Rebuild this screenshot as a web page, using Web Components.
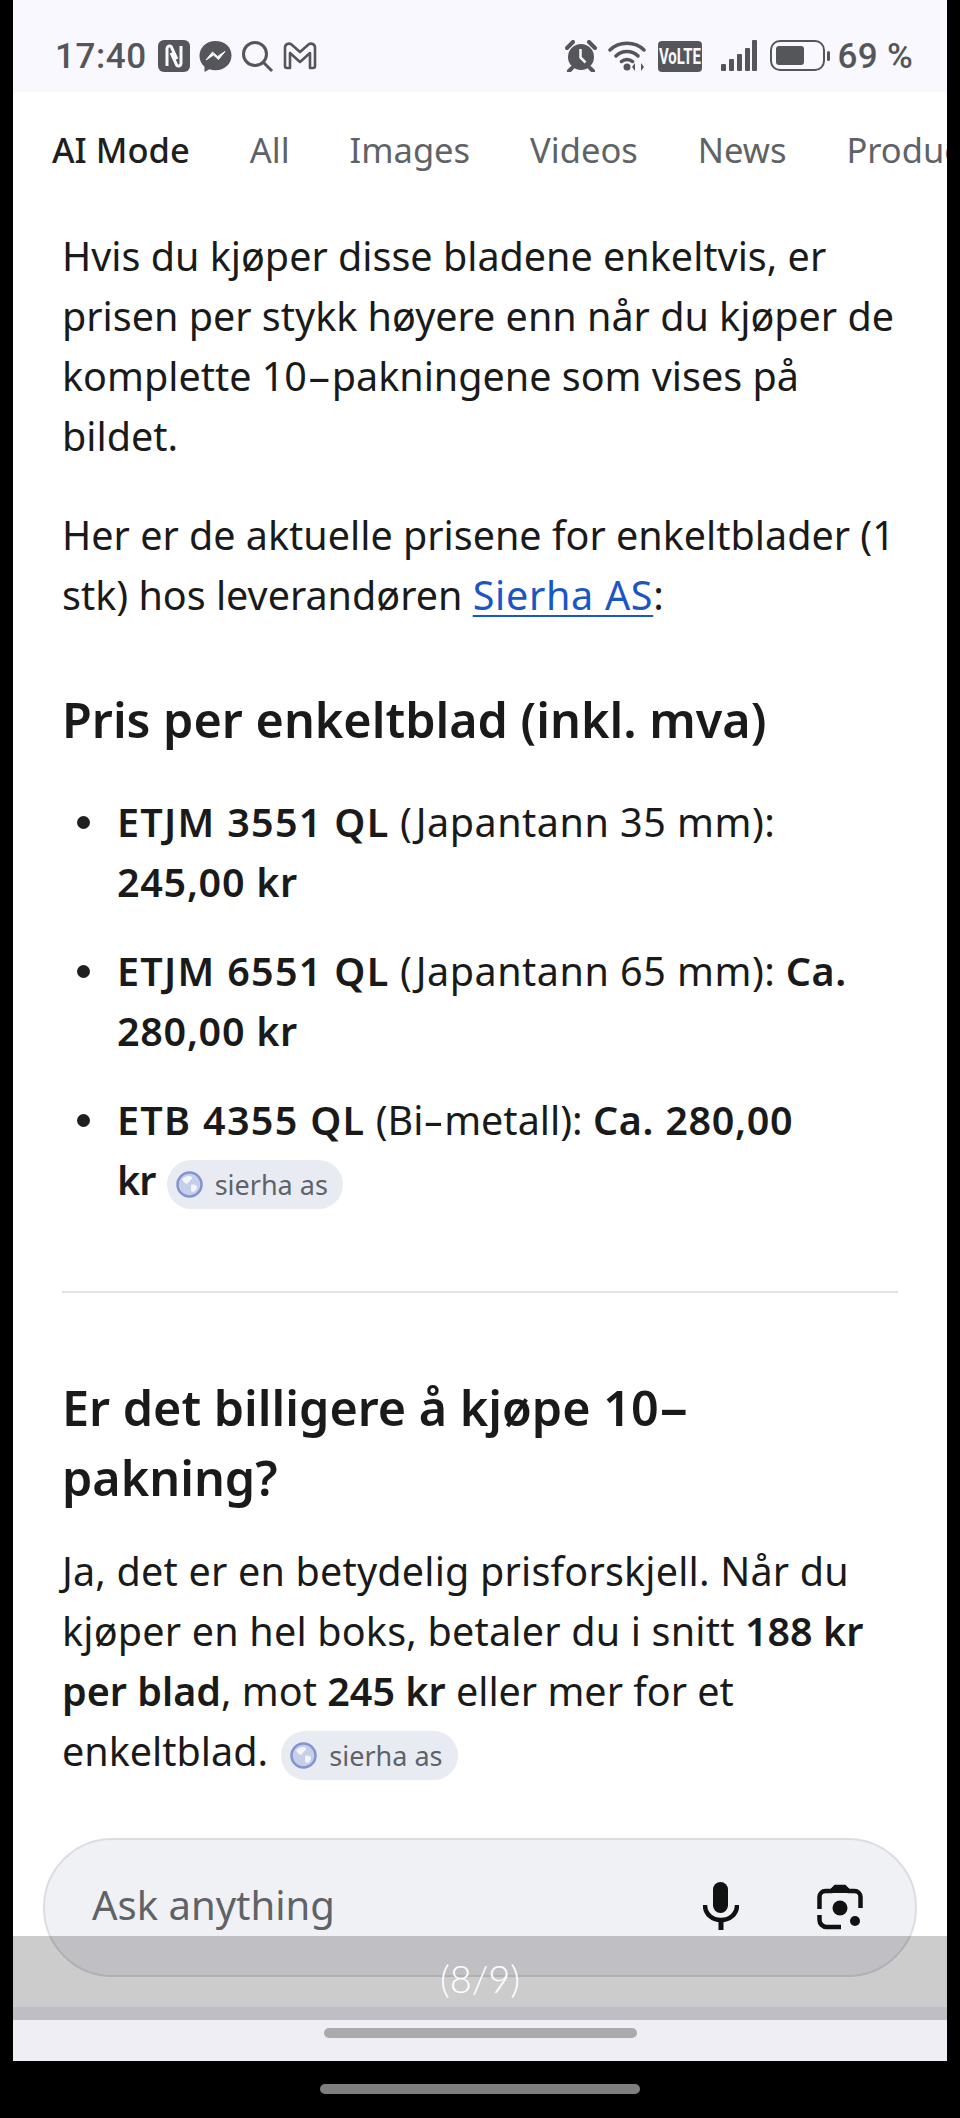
<!DOCTYPE html>
<html>
<head>
<meta charset="utf-8">
<title>AI Mode</title>
<style>
    html, body { margin: 0; background: #000; }
    a { color: #1a56c4; letter-spacing: .7px; text-decoration: underline; text-decoration-thickness: 2px; text-underline-offset: 5px; }
    b { font-weight: 600; }
    b.num { letter-spacing: .7px; }
    b.code { letter-spacing: 1.300px; }
    b.tight { letter-spacing: -1px; }
    .wide { letter-spacing: .5px; }
    .wide-s { letter-spacing: .2px; }
    /* le trait d'union de la police d'origine est plus long */
    .dash { display: inline-block; transform: scaleX(1.900); margin: 0 6px; }
    .dash-s { display: inline-block; transform: scaleX(1.600); margin: 0 4px; }
    .dash-h { display: inline-block; transform: scaleX(1.900); margin: 0 7px; }
</style>
</head>
<body>

<phone-frame>
    <status-bar></status-bar>
    <tab-strip>
        <tab-link active>AI Mode</tab-link>
        <tab-link>All</tab-link>
        <tab-link>Images</tab-link>
        <tab-link>Videos</tab-link>
        <tab-link>News</tab-link>
        <tab-link>Products</tab-link>
    </tab-strip>
    <answer-body>
        <answer-para>Hvis du kjøper disse bladene enkeltvis, er<br>prisen per stykk høyere enn når du kjøper de<br>komplette 10<span class="dash">-</span>pakningene som vises på<br>bildet.</answer-para>
        <answer-para>Her er de aktuelle prisene for enkeltblader (1<br>stk) hos leverandøren <a href="#">Sierha AS</a>:</answer-para>
        <answer-heading>Pris per enkeltblad (inkl. mva)</answer-heading>
        <bullet-list>
            <bullet-item><b class="code">ETJM 3551 QL</b> <span class="wide">(Japantann 35 mm):</span><br><b class="num">245,00 kr</b></bullet-item>
            <bullet-item><b class="code">ETJM 6551 QL</b> <span class="wide">(Japantann 65 mm):</span> <b class="num">Ca.</b><br><b class="num">280,00 kr</b></bullet-item>
            <bullet-item><b class="code">ETB 4355 QL</b> (Bi<span class="dash-s">-</span>metall): <b class="num">Ca. 280,00</b><br><b class="tight">kr</b> <source-chip style="margin-left:1px">sierha as</source-chip></bullet-item>
        </bullet-list>
        <answer-rule></answer-rule>
        <answer-heading>Er det billigere å kjøpe 10<span class="dash-h">-</span><br>pakning?</answer-heading>
        <answer-para><span class="wide-s">Ja, det er en betydelig prisforskjell. Når du</span><br><span class="wide-s">kjøper en hel boks, betaler du i snitt</span> <b>188 kr</b><br><b>per blad</b>, mot <b>245 kr</b> eller mer for et<br>enkeltblad. <source-chip>sierha as</source-chip></answer-para>
    </answer-body>
    <ask-bar></ask-bar>
    <nav-pill></nav-pill>
    <page-counter>(8/9)</page-counter>
</phone-frame>

<script>
class PhoneFrame extends HTMLElement {
    constructor() {
        super();
        this.attachShadow({ mode: 'open' });
    }
    connectedCallback() {
        this.shadowRoot.innerHTML = `
        <style>
            :host { display: block; width: 960px; height: 2118px; background: #000; overflow: hidden; position: relative; }
            .screen {
                position: relative;
                margin: 0 13px;
                width: 934px;
                height: 2061px;
                background: #fff;
                display: flex;
                flex-direction: column;
                overflow: hidden;
                font-family: "Noto Sans", sans-serif;
                color: #1a1a1a;
            }
            .handle { width: 320px; height: 10px; margin: 23px auto 0; border-radius: 5px; background: #7f7f7f; }
        </style>
        <div class="screen"><slot></slot></div>
        <div class="handle"></div>
        `;
    }
}

class StatusBar extends HTMLElement {
    constructor() {
        super();
        this.attachShadow({ mode: 'open' });
    }
    connectedCallback() {
        this.shadowRoot.innerHTML = `
        <style>
            :host {
                display: flex; flex: none; align-items: center; height: 92px; box-sizing: border-box;
                padding: 28px 34px 8px 42px; background: #f8f8fe; color: #555659;
                font: 500 35px "Roboto", sans-serif;
            }
            .left, .right { display: flex; align-items: center; }
            .right { margin-left: auto; }
            .time { letter-spacing: .6px; }
            svg { display: block; flex: none; }
            .volte { width: 44px; height: 31px; margin-left: 10px; border-radius: 4px; background: #555659; color: #f8f8fe;
                display: flex; align-items: center; justify-content: center; }
            .volte span { font: 700 22px "Roboto", sans-serif; transform: scaleX(.68); white-space: nowrap; }
            .pct { margin-left: 8px; letter-spacing: .3px; }
        </style>
        <div class="left">
            <span class="time">17:40</span>
            <svg style="margin-left:11px" width="32" height="32" viewBox="0 0 32 32">
                <rect x="0" y="0" width="32" height="32" rx="6" fill="#555659"/>
                <path d="M9 26V8.500a2.500 2.500 0 0 1 4.300-1.700l5.600 12.400M23 6v17.500a2.500 2.500 0 0 1-4.300 1.700l-5.600-12.400" fill="none" stroke="#f8f8fe" stroke-width="3"/>
            </svg>
            <svg style="margin-left:9px" width="33" height="33" viewBox="0 0 33 33">
                <path d="M16.500 1C7.500 1 .5 7.300.5 15.800c0 4.500 1.900 8.300 5 11v5.200l4.900-2.700c1.900.6 3.900.9 6.100.9 9 0 16-6.300 16-14.800S25.500 1 16.500 1z" fill="#555659"/>
                <path d="M7 20l6.500-8 5 4.500 7.500-5-6.500 8-5-4.500z" fill="#f8f8fe" stroke="#f8f8fe" stroke-width="1"/>
            </svg>
            <svg style="margin-left:9px" width="33" height="33" viewBox="0 0 33 33" fill="none" stroke="#555659" stroke-width="3">
                <circle cx="14" cy="14" r="11.500"/><path d="M22 22l9 9"/>
            </svg>
            <svg style="margin-left:9px" width="34" height="30" viewBox="0 0 34 30" fill="none" stroke="#555659" stroke-width="2.600" stroke-linejoin="round">
                <path d="M2 6.500a4 4 0 0 1 6.500-3L17 11l8.500-7.500a4 4 0 0 1 6.500 3V25a2 2 0 0 1-2 2h-3V12l-10 9-10-9v15H4a2 2 0 0 1-2-2z"/>
            </svg>
        </div>
        <div class="right">
            <svg width="32" height="32" viewBox="0 0 32 32">
                <circle cx="16" cy="17" r="13" fill="#555659"/>
                <path d="M2 8l6-6M30 8l-6-6M7 28l-3 3M25 28l3 3" stroke="#555659" stroke-width="4" stroke-linecap="round"/>
                <path d="M15.500 9v8.500l5 5" fill="none" stroke="#f8f8fe" stroke-width="2.500"/>
            </svg>
            <svg style="margin-left:11px" width="40" height="32" viewBox="0 0 40 32" fill="none" stroke="#555659" stroke-width="3.500" stroke-linecap="round">
                <path d="M2 10c9-9 25-9 34 0M8 16c6-6 16-6 22 0M13.500 21.500c3-2.800 8-2.800 11 0"/>
                <circle cx="19" cy="27" r="3.500" fill="#555659" stroke="none"/>
                <path d="M27 23v8l-3-4zM33 23v8l3-4z" stroke="none" fill="#555659"/>
            </svg>
            <div class="volte"><span>VoLTE</span></div>
            <svg style="margin-left:19px" width="36" height="32" viewBox="0 0 36 32" fill="#555659">
                <rect x="0" y="24" width="5" height="7" rx="1"/><rect x="8" y="19" width="5" height="12" rx="1"/><rect x="16" y="14" width="5" height="17" rx="1"/><rect x="24" y="8" width="5" height="23" rx="1"/><rect x="31" y="0" width="5" height="31" rx="1"/>
            </svg>
            <svg style="margin-left:13px" width="60" height="32" viewBox="0 0 60 32">
                <rect x="1" y="1" width="53" height="29" rx="9" fill="none" stroke="#555659" stroke-width="2"/>
                <rect x="6" y="6" width="28" height="19" rx="3" fill="#555659"/>
                <rect x="57" y="11" width="3" height="10" rx="1.500" fill="#555659"/>
            </svg>
            <span class="pct">69 %</span>
        </div>
        `;
    }
}

class TabStrip extends HTMLElement {
    constructor() {
        super();
        this.attachShadow({ mode: 'open' });
    }
    connectedCallback() {
        this.shadowRoot.innerHTML = `
        <style>
            :host { display: flex; flex: none; height: 114px; margin-bottom: 2px; box-sizing: border-box; padding: 0 0 0 39px; gap: 60px; align-items: center; overflow: hidden; white-space: nowrap; }
        </style>
        <slot></slot>
        `;
    }
}

class TabLink extends HTMLElement {
    constructor() {
        super();
        this.attachShadow({ mode: 'open' });
    }
    connectedCallback() {
        this.shadowRoot.innerHTML = `
        <style>
            :host { display: block; flex: none; font-size: 34.500px; color: #5f6368; }
            :host([active]) { color: #1f1f1f; font-weight: 500; }
        </style>
        <slot></slot>
        `;
    }
}

class AnswerBody extends HTMLElement {
    constructor() {
        super();
        this.attachShadow({ mode: 'open' });
    }
    connectedCallback() {
        this.shadowRoot.innerHTML = `
        <style>
            :host { display: flex; flex-direction: column; flex: 1; min-height: 0; box-sizing: border-box; padding: 18px 49px 0; font-size: 39.500px; line-height: 60px; white-space: nowrap; }
        </style>
        <slot></slot>
        `;
    }
}

class AnswerPara extends HTMLElement {
    constructor() {
        super();
        this.attachShadow({ mode: 'open' });
    }
    connectedCallback() {
        this.shadowRoot.innerHTML = `
        <style>
            :host { display: block; margin-bottom: 39px; }
        </style>
        <slot></slot>
        `;
    }
}

class AnswerHeading extends HTMLElement {
    constructor() {
        super();
        this.attachShadow({ mode: 'open' });
    }
    connectedCallback() {
        this.shadowRoot.innerHTML = `
        <style>
            :host { display: block; margin: 20px 0 29px; font-size: 48.500px; line-height: 70px; font-weight: 600; }
        </style>
        <slot></slot>
        `;
    }
}

class BulletList extends HTMLElement {
    constructor() {
        super();
        this.attachShadow({ mode: 'open' });
    }
    connectedCallback() {
        this.shadowRoot.innerHTML = `
        <style>
            :host { display: flex; flex-direction: column; gap: 29px; padding-top: 9px; }
        </style>
        <slot></slot>
        `;
    }
}

class BulletItem extends HTMLElement {
    constructor() {
        super();
        this.attachShadow({ mode: 'open' });
    }
    connectedCallback() {
        this.shadowRoot.innerHTML = `
        <style>
            :host { display: flex; margin-left: 15px; gap: 27px; }
            .dot { flex: none; width: 13px; height: 13px; margin-top: 24px; border-radius: 50%; background: #1f1f1f; }
        </style>
        <div class="dot"></div>
        <div><slot></slot></div>
        `;
    }
}

class AnswerRule extends HTMLElement {
    constructor() {
        super();
        this.attachShadow({ mode: 'open' });
    }
    connectedCallback() {
        this.shadowRoot.innerHTML = `
        <style>
            :host { display: block; flex: none; height: 2px; margin: 81px 0 59px; background: #e3e3e3; }
        </style>
        `;
    }
}

class SourceChip extends HTMLElement {
    constructor() {
        super();
        this.attachShadow({ mode: 'open' });
    }
    connectedCallback() {
        this.shadowRoot.innerHTML = `
        <style>
            :host {
                display: inline-flex; align-items: center; vertical-align: middle; gap: 12px; box-sizing: border-box;
                height: 49px; padding: 0 15px 0 9px; margin-left: 3px; border-radius: 25px; letter-spacing: 0;
                background: #e9ebf2; color: #5f6368; font-size: 27px; font-weight: 400; line-height: 49px;
            }
            svg { display: block; flex: none; }
        </style>
        <svg width="27" height="27" viewBox="0 0 27 27">
            <circle cx="13.500" cy="13.500" r="12" fill="#c5cfe8" stroke="#8294cf" stroke-width="2.500"/>
            <path d="M6 8c3-3 8-4 10-2 1 2-2 3-3 5s-3 2-4 1-2-2-3-4zM15 14c3-1 6 0 6 2s-2 5-4 5-2-2-2-3 0-3 0-4z" fill="#f3f5fb"/>
        </svg>
        <slot></slot>
        `;
    }
}

class AskBar extends HTMLElement {
    constructor() {
        super();
        this.attachShadow({ mode: 'open' });
    }
    connectedCallback() {
        this.shadowRoot.innerHTML = `
        <style>
            :host {
                display: flex; flex: none; align-items: flex-start; box-sizing: border-box;
                width: 874px; height: 139px; margin: 0 30px 30px; padding: 42px 52px 0 47px;
                background: #f0f1f5; border: 2px solid #dcdde2; border-radius: 70px;
            }
            .ph { font-size: 40px; line-height: 50px; margin-top: -2px; color: #5f6368; }
            svg { display: block; flex: none; }
        </style>
        <span class="ph">Ask anything</span>
        <svg style="margin-left:auto" width="36" height="48" viewBox="0 0 36 48" fill="none">
            <rect x="10" y="0" width="15" height="31" rx="7.500" fill="#111"/>
            <path d="M2 23c0 9 7 15 16 15s16-6 16-15" stroke="#111" stroke-width="4.500"/>
            <path d="M18 36v12" stroke="#111" stroke-width="5"/>
        </svg>
        <svg style="margin-left:78px;margin-top:2px" width="46" height="46" viewBox="0 0 46 46" fill="none">
            <path d="M2.500 25V13a6 6 0 0 1 6-6h6l4-4h9l4 4h6a6 6 0 0 1 6 6v11" stroke="#111" stroke-width="4.500"/>
            <path d="M14 4h18v5H14z" fill="#111"/>
            <path d="M2.500 31v5a7 7 0 0 0 7 7H24" stroke="#111" stroke-width="4.500"/>
            <circle cx="23" cy="24" r="7.500" fill="#111"/>
            <circle cx="38" cy="37" r="5" fill="#111"/>
        </svg>
        `;
    }
}

class NavPill extends HTMLElement {
    constructor() {
        super();
        this.attachShadow({ mode: 'open' });
    }
    connectedCallback() {
        this.shadowRoot.innerHTML = `
        <style>
            :host { display: flex; flex: none; height: 54px; justify-content: center; background: #efeef5; }
            .bar { width: 313px; height: 10px; margin-top: 21px; border-radius: 5px; background: #aaaaac; }
        </style>
        <div class="bar"></div>
        `;
    }
}

// bande grise par-dessus la barre de saisie
class PageCounter extends HTMLElement {
    constructor() {
        super();
        this.attachShadow({ mode: 'open' });
    }
    connectedCallback() {
        this.shadowRoot.innerHTML = `
        <style>
            :host {
                position: absolute; left: 0; right: 0; top: 1936px; height: 84px;
                background: rgba(0,0,0,.2); color: #fff; text-align: center;
                font: 300 38px/84px "Lato", sans-serif;
            }
        </style>
        <slot></slot>
        `;
    }
}

customElements.define('phone-frame', PhoneFrame);
customElements.define('status-bar', StatusBar);
customElements.define('tab-strip', TabStrip);
customElements.define('tab-link', TabLink);
customElements.define('answer-body', AnswerBody);
customElements.define('answer-para', AnswerPara);
customElements.define('answer-heading', AnswerHeading);
customElements.define('bullet-list', BulletList);
customElements.define('bullet-item', BulletItem);
customElements.define('answer-rule', AnswerRule);
customElements.define('source-chip', SourceChip);
customElements.define('ask-bar', AskBar);
customElements.define('nav-pill', NavPill);
customElements.define('page-counter', PageCounter);
</script>
</body>
</html>
